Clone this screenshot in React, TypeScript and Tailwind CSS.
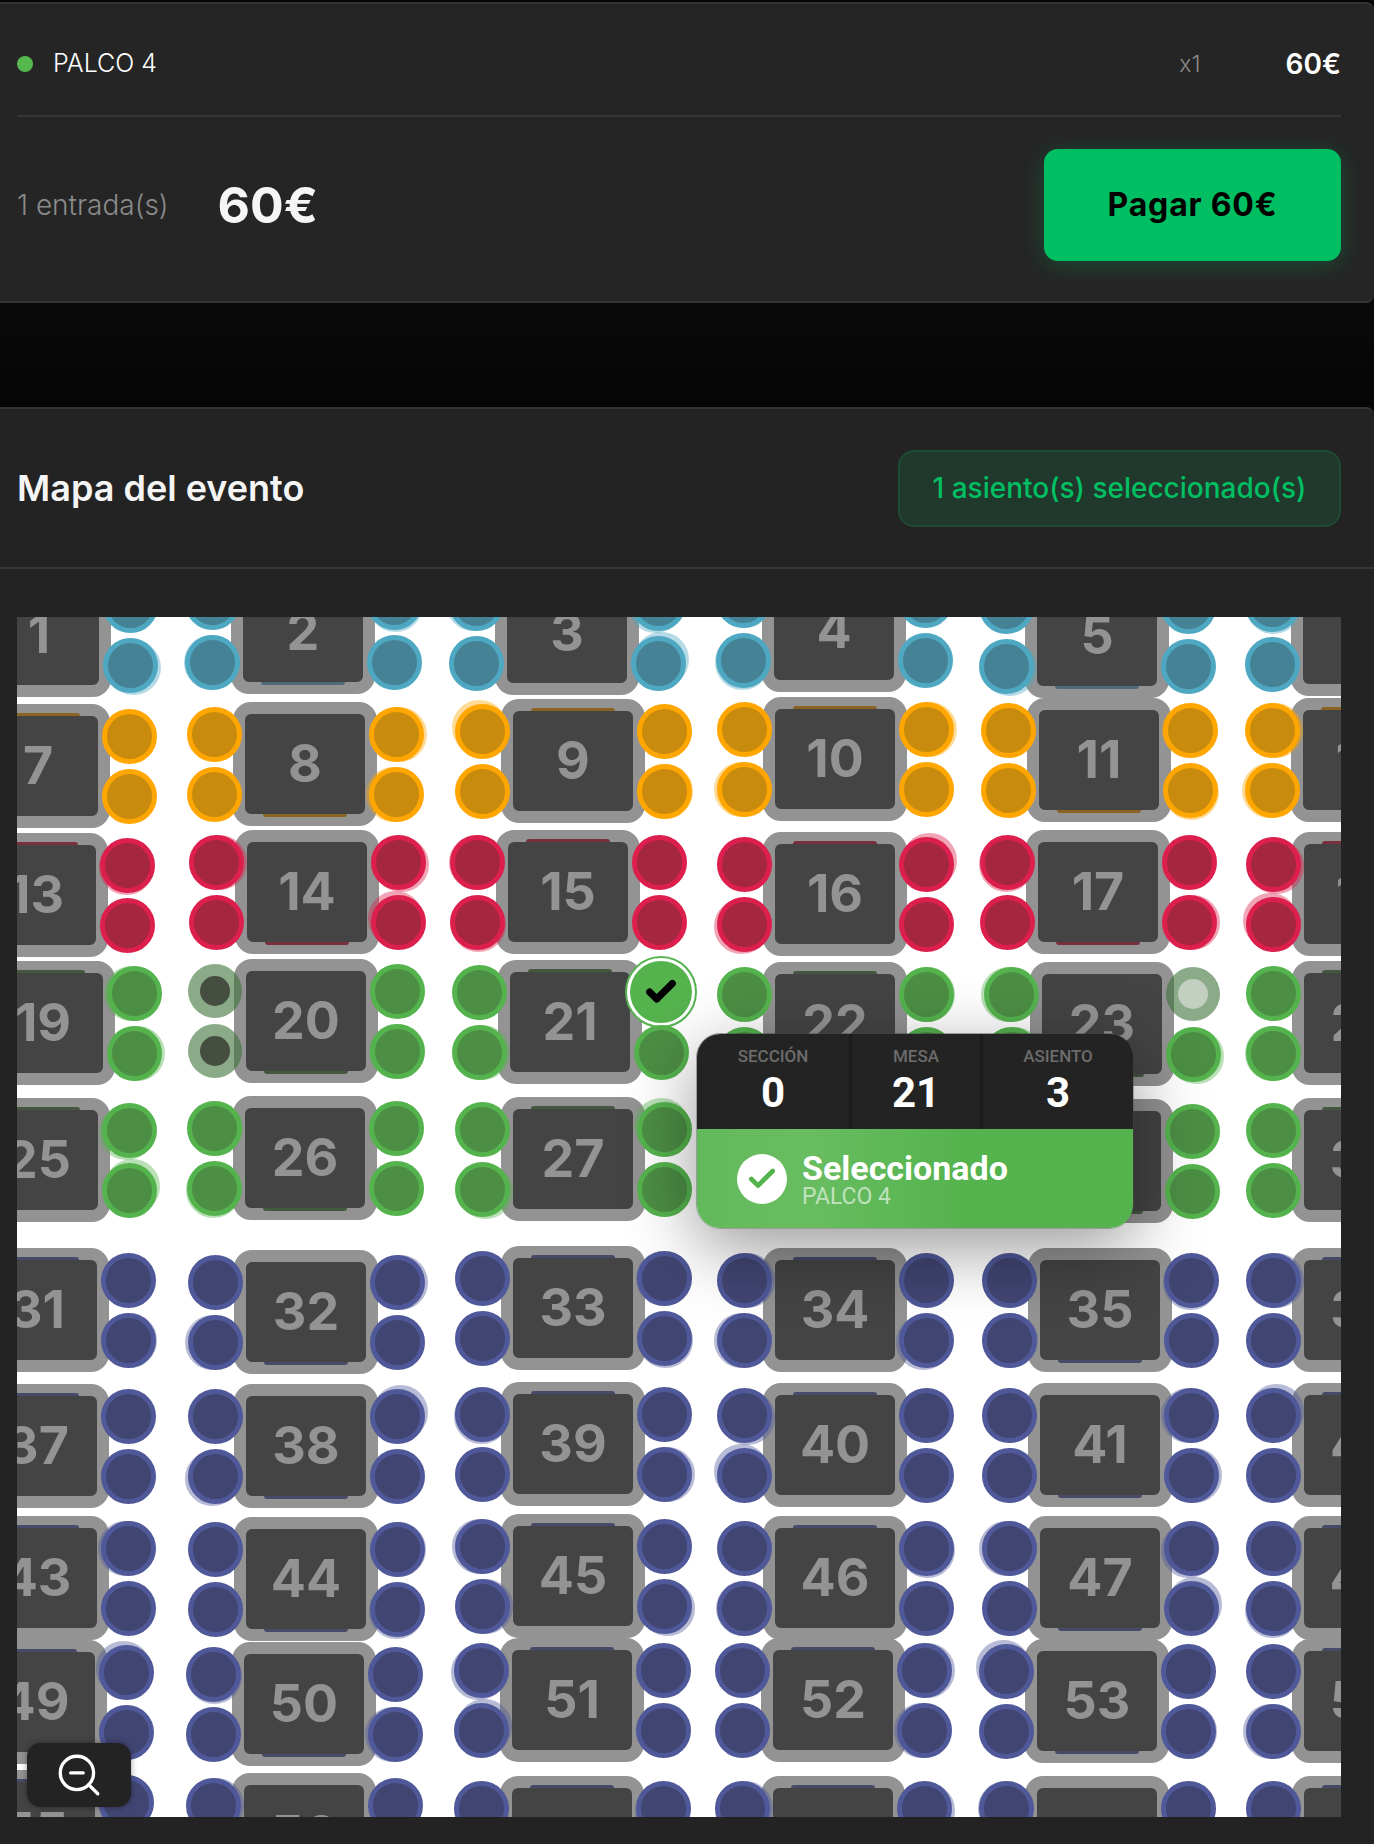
import { Check, ZoomOut } from "lucide-react";

type Tone = "teal" | "orange" | "red" | "green" | "blue";

const seatTone: Record<Tone, string> = {
  teal: "border-[#4ea8c2] bg-[#458296]",
  orange: "border-[#ffa600] bg-[#c98b0e]",
  red: "border-[#dc1f4c] bg-[#a5273f]",
  green: "border-[#55b34e] bg-[#4c8e44]",
  blue: "border-[#4f5898] bg-[#414571]",
};

const stripTone: Record<Tone, string> = {
  teal: "bg-[#4f6a78]",
  orange: "bg-[#8a6420]",
  red: "bg-[#7a2f3c]",
  green: "bg-[#44583f]",
  blue: "bg-[#474a68]",
};

const rows: { tone: Tone; start: number; items: [number, number][] }[] = [
  { tone: "teal", start: 1, items: [[39, 635], [303, 632], [567, 633], [834, 630], [1097, 636], [1363, 634]] },
  { tone: "orange", start: 7, items: [[38, 766], [305, 764], [573, 761], [835, 759], [1099, 760], [1363, 760]] },
  { tone: "red", start: 13, items: [[36, 895], [307, 892], [568, 892], [835, 894], [1098, 892], [1364, 894]] },
  { tone: "green", start: 19, items: [[43, 1023], [306, 1021], [570, 1022], [835, 1024], [1102, 1024], [1364, 1023]] },
  { tone: "green", start: 25, items: [[38, 1160], [305, 1158], [573, 1159], [835, 1160], [1101, 1161], [1364, 1160]] },
  { tone: "blue", start: 31, items: [[37, 1310], [306, 1312], [573, 1308], [835, 1310], [1100, 1310], [1364, 1310]] },
  { tone: "blue", start: 37, items: [[37, 1446], [306, 1446], [573, 1444], [835, 1445], [1100, 1445], [1364, 1445]] },
  { tone: "blue", start: 43, items: [[37, 1578], [306, 1579], [573, 1576], [835, 1578], [1100, 1578], [1364, 1578]] },
  { tone: "blue", start: 49, items: [[35, 1702], [304, 1704], [572, 1700], [833, 1700], [1097, 1701], [1364, 1701]] },
  { tone: "blue", start: 55, items: [[35, 1832], [304, 1835], [572, 1838], [833, 1838], [1097, 1838], [1364, 1838]] },
];

// canvas origin of the map inside the page
const OX = 17;
const OY = 617;

function Table({ n, x, y, tone }: { n: number; x: number; y: number; tone: Tone }) {
  return (
    <div
      className="absolute flex h-[124px] w-[144px] items-center justify-center rounded-[18px] border-[12px] border-[#939393] bg-[#444444] font-['Inter',sans-serif] text-[52px] leading-none font-bold text-[#939393]"
      style={{ left: x - OX - 72, top: y - OY - 62 }}
    >
      {n % 3 === 2 ? (
        <div className={`absolute -bottom-[3px] left-[18px] h-[3px] w-[84px] rounded-b-md ${stripTone[tone]}`} />
      ) : (
        <div className={`absolute -top-[3px] left-[18px] h-[3px] w-[84px] rounded-t-md ${stripTone[tone]}`} />
      )}
      <span>{n}</span>
    </div>
  );
}

function Seat({ x, y, tone, gx, gy }: { x: number; y: number; tone: Tone; gx: number; gy: number }) {
  return (
    <>
      {(gx !== 0 || gy !== 0) && (
        <div
          className={`absolute h-[55px] w-[55px] rounded-full border-[5px] opacity-40 ${seatTone[tone]}`}
          style={{ left: x - OX - 27 + gx, top: y - OY - 27 + gy }}
        />
      )}
      <div
        className={`absolute h-[55px] w-[55px] rounded-full border-[5px] ${seatTone[tone]}`}
        style={{ left: x - OX - 27, top: y - OY - 27 }}
      />
    </>
  );
}

function SoldSeat({ x, y, light }: { x: number; y: number; light?: boolean }) {
  return (
    <div
      className="absolute flex h-[54px] w-[54px] items-center justify-center rounded-full bg-[#3e7139]/60"
      style={{ left: x - OX - 27, top: y - OY - 27 }}
    >
      <div className={`h-[30px] w-[30px] rounded-full ${light ? "bg-[#c3cfc1]" : "bg-[#464d41]"}`} />
    </div>
  );
}

function SelectedSeat({ x, y }: { x: number; y: number }) {
  return (
    <div
      className="absolute h-[72px] w-[72px] rounded-full border-2 border-[#55b34e] bg-white p-[3px]"
      style={{ left: x - OX - 36, top: y - OY - 36 }}
    >
      <div className="flex h-full w-full items-center justify-center rounded-full bg-[#55b34e]">
        <Check size={34} strokeWidth={5} className="text-black" />
      </div>
    </div>
  );
}

function seatOffset(n: number, i: number) {
  const a = (n * 7 + i * 3) % 11;
  if (a < 5) return { gx: 0, gy: 0 };
  return { gx: ((n + i) % 2 === 0 ? 1 : -1) * (a % 3 === 0 ? 1 : 3), gy: a % 4 === 0 ? -4 : a % 4 === 1 ? 2 : 0 };
}

function SeatMap() {
  const tables: { n: number; x: number; y: number; tone: Tone }[] = [];
  rows.forEach((r) => r.items.forEach(([x, y], i) => tables.push({ n: r.start + i, x, y, tone: r.tone })));

  return (
    <div className="relative h-[1200px] w-[1324px] overflow-hidden bg-white">
      {tables.map((t) => (
        <Table key={t.n} {...t} />
      ))}
      {tables.map((t) =>
        [
          [-91, -30],
          [-91, 30],
          [91, -30],
          [91, 30],
        ].map(([dx, dy], i) => {
          const sx = t.x + dx;
          const sy = t.y + dy;
          const key = `${t.n}-${i}`;
          if (t.n === 20 && dx < 0) return <SoldSeat key={key} x={sx} y={sy} />;
          if (t.n === 23 && i === 2) return <SoldSeat key={key} x={sx} y={sy} light />;
          if (t.n === 21 && i === 2) return <SelectedSeat key={key} x={sx} y={sy} />;
          return <Seat key={key} x={sx} y={sy} tone={t.tone} {...seatOffset(t.n, i)} />;
        })
      )}

      {/* seat tooltip */}
      <div className="absolute top-[416px] left-[679px] w-[438px] overflow-hidden rounded-[24px] border border-[#3a3a3a]/50 font-['Roboto',sans-serif] shadow-[0_20px_70px_rgba(0,0,0,0.4)]">
        <div className="flex h-[95px] divide-x-[3px] divide-[#1b1b1b] bg-[#232323]">
          {[
            ["SECCIÓN", "0", "w-[155px]"],
            ["MESA", "21", "w-[131px]"],
            ["ASIENTO", "3", "flex-1"],
          ].map(([label, value, w]) => (
            <div key={label} className={`flex flex-col items-center pt-[13px] ${w}`}>
              <span className="text-[17px] leading-[18px] font-medium text-[#6c6c6c]">{label}</span>
              <span className="mt-[4px] text-[42px] leading-[48px] font-bold text-white">{value}</span>
            </div>
          ))}
        </div>
        <div className="flex h-[99px] items-center gap-[15px] bg-gradient-to-r from-[#62b95b] via-[#68bd61] via-25% to-[#55b34e] to-60% pl-[40px]">
          <div className="flex h-[50px] w-[50px] items-center justify-center rounded-full bg-white">
            <Check size={32} strokeWidth={3.5} className="text-[#55b34e]" />
          </div>
          <div className="flex flex-col">
            <span className="text-[34px] leading-[36px] font-bold text-white">Seleccionado</span>
            <span className="text-[23px] leading-[22px] text-white/60">PALCO 4</span>
          </div>
        </div>
      </div>

      {/* zoom control */}
      <button className="absolute top-[1126px] left-[10px] flex h-[64px] w-[104px] items-center justify-center rounded-[14px] bg-[#232323] shadow-[0_0_6px_rgba(0,0,0,0.4)]">
        <ZoomOut size={50} strokeWidth={1.6} className="text-white" />
      </button>
    </div>
  );
}

export default function App() {
  return (
    <div className="min-h-[1844px] w-[1374px] bg-[#060606] pt-[2px] font-['Inter',sans-serif]">
      <section className="rounded-r-lg border-y-2 border-[#333333] bg-[#252525] pr-[33px] pl-[17px]">
        <div className="flex h-[113px] items-center border-b-2 border-[#363636] pt-[9px]">
          <span className="h-4 w-4 rounded-full bg-[#55b84f]" />
          <span className="ml-5 text-[25px] font-light text-white">PALCO 4</span>
          <span className="ml-auto text-[23px] font-light text-[#8a8a8a]">x1</span>
          <span className="ml-[85px] text-[28px] font-semibold text-white">60€</span>
        </div>
        <div className="flex h-[184px] items-center pb-2">
          <span className="text-[28px] font-light text-[#8a8a8a]">1 entrada(s)</span>
          <span className="ml-[49px] text-[50px] font-bold text-[#f5f5f5]">60€</span>
          <button className="ml-auto h-[112px] w-[297px] rounded-[14px] bg-[#00bf63] text-[32px] font-bold tracking-wide text-black shadow-[0_4px_24px_rgba(0,191,99,0.25)]">
            Pagar 60€
          </button>
        </div>
      </section>

      <div className="h-[104px] bg-gradient-to-b from-[#0a0a0a] to-[#050505]" />

      <section className="rounded-tr-lg border-t-2 border-[#333333] bg-[#232323] pb-[27px]">
        <div className="flex h-[160px] items-center justify-between border-b-2 border-[#363636] pr-[33px] pl-[17px]">
          <h2 className="text-[36px] font-semibold text-[#f5f5f5]">Mapa del evento</h2>
          <div className="flex h-[77px] w-[443px] items-center justify-center rounded-2xl border-2 border-[#1f4a33] bg-[#21392c] text-[28px] font-medium text-[#00bf63]">
            1 asiento(s) seleccionado(s)
          </div>
        </div>
        <div className="mt-[48px] pl-[17px]">
          <SeatMap />
        </div>
      </section>
    </div>
  );
}
